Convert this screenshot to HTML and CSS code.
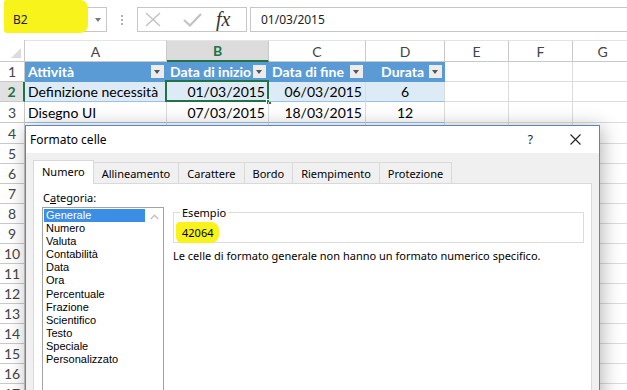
FILE: index.html
```html
<!DOCTYPE html>
<html lang="it">
<head>
<meta charset="utf-8">
<title>Formato celle</title>
<link rel="stylesheet" href="styles.css">
</head>
<body>
<div class="app">
  <div class="fbar">
    <span class="hl-name"></span>
    <div class="namebox"><span class="nb-text">B2</span><span class="nb-arrow"></span></div>
    <div class="dots"><i></i><i></i><i></i></div>
    <div class="fbtns">
      <svg class="ic-x" width="16" height="15" viewBox="0 0 16 15"><path d="M1 1 L15 14 M15 1 L1 14" stroke="#c3c3c3" stroke-width="1.5" fill="none"/></svg>
      <svg class="ic-check" width="19" height="15" viewBox="0 0 19 15"><path d="M1 8 L7 13.5 L18 2" stroke="#c3c3c3" stroke-width="2.2" fill="none"/></svg>
      <span class="fx">fx</span>
    </div>
    <div class="finput">01/03/2015</div>
  </div>

  <div class="sheet">
    <div class="c corner"><span class="tri"></span></div>
    <div class="c ch">A</div>
    <div class="c ch sel">B</div>
    <div class="c ch">C</div>
    <div class="c ch">D</div>
    <div class="c ch">E</div>
    <div class="c ch">F</div>
    <div class="c ch">G</div>

    <div class="c rh">1</div>
    <div class="c th">Attività<span class="flt"></span></div>
    <div class="c th">Data di inizio<span class="flt"></span></div>
    <div class="c th">Data di fine<span class="flt"></span></div>
    <div class="c th right">Durata<span class="flt"></span></div>
    <div class="c"></div><div class="c"></div><div class="c"></div>

    <div class="c rh rsel">2</div>
    <div class="c band">Definizione necessità</div>
    <div class="c band num active">01/03/2015<span class="selbox"></span><span class="handle"></span></div>
    <div class="c band num">06/03/2015</div>
    <div class="c band ctr">6</div>
    <div class="c"></div><div class="c"></div><div class="c"></div>

    <div class="c rh">3</div>
    <div class="c tlast">Disegno UI</div>
    <div class="c tlast num">07/03/2015</div>
    <div class="c tlast num">18/03/2015</div>
    <div class="c tlast ctr">12</div>
    <div class="c"></div><div class="c"></div><div class="c"></div>

    <div class="c rh">4</div><div class="c"></div><div class="c"></div><div class="c"></div><div class="c"></div><div class="c"></div><div class="c"></div><div class="c"></div>
    <div class="c rh">5</div><div class="c"></div><div class="c"></div><div class="c"></div><div class="c"></div><div class="c"></div><div class="c"></div><div class="c"></div>
    <div class="c rh">6</div><div class="c"></div><div class="c"></div><div class="c"></div><div class="c"></div><div class="c"></div><div class="c"></div><div class="c"></div>
    <div class="c rh">7</div><div class="c"></div><div class="c"></div><div class="c"></div><div class="c"></div><div class="c"></div><div class="c"></div><div class="c"></div>
    <div class="c rh">8</div><div class="c"></div><div class="c"></div><div class="c"></div><div class="c"></div><div class="c"></div><div class="c"></div><div class="c"></div>
    <div class="c rh">9</div><div class="c"></div><div class="c"></div><div class="c"></div><div class="c"></div><div class="c"></div><div class="c"></div><div class="c"></div>
    <div class="c rh">10</div><div class="c"></div><div class="c"></div><div class="c"></div><div class="c"></div><div class="c"></div><div class="c"></div><div class="c"></div>
    <div class="c rh">11</div><div class="c"></div><div class="c"></div><div class="c"></div><div class="c"></div><div class="c"></div><div class="c"></div><div class="c"></div>
    <div class="c rh">12</div><div class="c"></div><div class="c"></div><div class="c"></div><div class="c"></div><div class="c"></div><div class="c"></div><div class="c"></div>
    <div class="c rh">13</div><div class="c"></div><div class="c"></div><div class="c"></div><div class="c"></div><div class="c"></div><div class="c"></div><div class="c"></div>
    <div class="c rh">14</div><div class="c"></div><div class="c"></div><div class="c"></div><div class="c"></div><div class="c"></div><div class="c"></div><div class="c"></div>
    <div class="c rh">15</div><div class="c"></div><div class="c"></div><div class="c"></div><div class="c"></div><div class="c"></div><div class="c"></div><div class="c"></div>
    <div class="c rh">16</div><div class="c"></div><div class="c"></div><div class="c"></div><div class="c"></div><div class="c"></div><div class="c"></div><div class="c"></div>
    <div class="c rh">17</div><div class="c"></div><div class="c"></div><div class="c"></div><div class="c"></div><div class="c"></div><div class="c"></div><div class="c"></div>
  </div>

  <div class="dlg">
    <div class="dlg-title">
      <span class="dlg-name">Formato celle</span>
      <span class="q">?</span>
      <svg class="close" width="11" height="11" viewBox="0 0 11 11"><path d="M0.5 0.5 L10.5 10.5 M10.5 0.5 L0.5 10.5" stroke="#222" stroke-width="1.1" fill="none"/></svg>
    </div>
    <div class="dlg-body">
      <div class="tabs">
        <div class="tab on">Numero</div>
        <div class="tab">Allineamento</div>
        <div class="tab">Carattere</div>
        <div class="tab">Bordo</div>
        <div class="tab">Riempimento</div>
        <div class="tab">Protezione</div>
      </div>
      <div class="panel">
        <div class="leftcol">
          <div class="lbl">C<u>a</u>tegoria:</div>
          <div class="list">
            <div class="items">
              <div class="it on">Generale</div>
              <div class="it">Numero</div>
              <div class="it">Valuta</div>
              <div class="it">Contabilità</div>
              <div class="it">Data</div>
              <div class="it">Ora</div>
              <div class="it">Percentuale</div>
              <div class="it">Frazione</div>
              <div class="it">Scientifico</div>
              <div class="it">Testo</div>
              <div class="it">Speciale</div>
              <div class="it">Personalizzato</div>
            </div>
            <div class="sbar">
              <svg width="9" height="6" viewBox="0 0 9 6"><path d="M0.8 5 L4.5 1.2 L8.2 5" stroke="#c2c2c2" stroke-width="1.3" fill="none"/></svg>
            </div>
          </div>
        </div>
        <div class="rightcol">
          <fieldset class="sample">
            <legend>Esempio</legend>
            <span class="sample-val">42064</span>
          </fieldset>
          <p class="desc">Le celle di formato generale non hanno un formato numerico specifico.</p>
        </div>
      </div>
    </div>
  </div>
</div>
</body>
</html>
```

FILE: styles.css
```css
* { box-sizing: border-box; margin: 0; padding: 0; }
html, body { width: 627px; height: 390px; overflow: hidden; background: #fff; }
body { font-family: "Noto Sans", "DejaVu Sans", sans-serif; }
.app { position: relative; width: 627px; height: 390px; overflow: hidden; }

/* formula bar */
.fbar { height: 40px; display: flex; align-items: flex-start; padding-top: 7px; position: relative; }
.hl-name { position: absolute; left: 4px; top: 0; width: 84px; height: 33px; background: #f8f31b; border-radius: 2px 8px 8px 3px; z-index: 1; }
.namebox { margin-left: 5px; width: 102px; height: 25px; border: 1px solid #c6c6c6; display: flex; align-items: center; padding-left: 7px; font-size: 12px; color: #222; }
.nb-text { position: relative; z-index: 2; }
.nb-arrow { margin-left: auto; margin-right: 5px; width: 0; height: 0; border-left: 3.5px solid transparent; border-right: 3.5px solid transparent; border-top: 4px solid #7a7a7a; }
.dots { margin-left: 14px; width: 2px; height: 25px; display: flex; flex-direction: column; justify-content: center; gap: 2px; }
.dots i { display: block; width: 2px; height: 2px; background: #b0b0b0; }
.fbtns { margin-left: 14px; width: 110px; height: 25px; border: 1px solid #c6c6c6; display: flex; align-items: center; padding-left: 7px; }
.ic-check { margin-left: 22px; }
.fx { margin-left: 14px; font-family: "Liberation Serif", "DejaVu Serif", serif; font-style: italic; font-size: 20px; color: #333; line-height: 1; margin-top: -2px; }
.finput { margin-left: 3px; flex: 1; height: 25px; border: 1px solid #c6c6c6; border-right: none; padding-left: 10px; font-size: 12px; line-height: 23px; color: #222; }

/* sheet */
.sheet { display: grid; grid-template-columns: 25px 142px 102px 97px 79px 64px 64px 60px; grid-template-rows: 22px 20px 20px 21px 21px repeat(13, 20px); font-family: Lato, "Noto Sans", sans-serif; font-size: 14px; color: #000; }
.c { border-right: 1px solid #dcdcdc; border-bottom: 1px solid #dcdcdc; display: flex; align-items: center; padding: 0 3px; white-space: nowrap; position: relative; }
.corner { border-color: #c9c9c9; }
.tri { position: absolute; right: 3px; bottom: 3px; width: 0; height: 0; border-left: 10px solid transparent; border-bottom: 10px solid #dcdcdc; }
.ch { justify-content: center; color: #444; border-color: #c9c9c9; border-top: 1px solid #e4e4e4; }
.ch.sel { background: #dcdcdc; color: #217346; font-weight: bold; border-bottom: 2px solid #217346; }
.rh { justify-content: center; color: #444; border-color: #c9c9c9; padding: 0; }
.rh.rsel { background: #e1e1e1; color: #217346; font-weight: bold; border-right: 2px solid #217346; }
.th { background: #5b9bd5; color: #fff; font-weight: bold; border-right-color: #5b9bd5; border-bottom-color: #5b9bd5; }
.th.right { justify-content: flex-end; padding-right: 20px; }
.flt { position: absolute; right: 2px; top: 3px; width: 13px; height: 13px; background: #ececec; }
.flt::after { content: ""; position: absolute; left: 3px; top: 5px; border-left: 3.5px solid transparent; border-right: 3.5px solid transparent; border-top: 4px solid #555; }
.band { background: #ddebf7; border-bottom-color: #9bc2e6; }
.tlast { border-bottom-color: #9bc2e6; }
.num { justify-content: flex-end; }
.ctr { justify-content: center; }
.selbox { position: absolute; left: -2px; top: -2px; right: -1px; bottom: -1px; border: 2px solid #217346; }
.handle { position: absolute; right: -4px; bottom: -4px; width: 6px; height: 6px; background: #217346; border: 1px solid #fff; }

/* dialog */
.dlg { position: absolute; left: 25px; top: 125px; width: 575px; height: 300px; border: 1px solid #5a87bb; background: #f0f0f0; box-shadow: 2px 2px 18px rgba(0,0,0,0.3); font-size: 11px; color: #000; display: flex; flex-direction: column; z-index: 5; }
.dlg-title { height: 27px; background: #fff; display: flex; align-items: center; padding-left: 4px; font-size: 12px; }
.q { margin-left: auto; font-size: 12px; color: #222; }
.close { margin-left: 37px; margin-right: 18px; }
.dlg-body { flex: 1; padding: 6px 7px 0; display: flex; flex-direction: column; }
.tabs { display: flex; align-items: flex-end; height: 24px; }
.tab { height: 21px; padding: 0 8px; border: 1px solid #d9d9d9; border-bottom: none; margin-left: -1px; background: #f0f0f0; display: flex; align-items: center; white-space: nowrap; }
.tab:first-child { margin-left: 0; }
.tab.on { height: 24px; background: #fff; margin-bottom: -1px; position: relative; z-index: 1; padding-bottom: 2px; }
.panel { flex: 1; width: 559px; background: #fff; border: 1px solid #d9d9d9; display: flex; padding: 6px 0 0 8px; }
.leftcol { width: 122px; display: flex; flex-direction: column; }
.lbl { padding-left: 1px; line-height: 15px; height: 15px; }
.lbl u { text-decoration: underline; }
.list { margin-top: 2px; flex: 1; border: 1px solid #a3a3a3; display: flex; padding: 1px 0 0 1px; }
.items { flex: 1; font-family: "Liberation Sans", Arial, sans-serif; font-size: 11px; }
.it { line-height: 13.1px; height: 13.1px; padding-left: 2px; white-space: nowrap; }
.it.on { background: #3a8ee6; color: #fff; }
.sbar { width: 18px; display: flex; justify-content: center; padding-top: 5px; }
.rightcol { margin-left: 9px; width: 411px; padding-top: 16px; }
.sample { border: 1px solid #dcdcdc; height: 37px; padding: 0 0 0 2px; margin: 0; }
.sample legend { margin-left: 4px; padding: 0 2px; line-height: 13px; }
.sample-val { display: inline-block; margin-top: 3px; padding: 3px 6px 3px 6px; background: #f8f31b; border-radius: 4px 8px 8px 6px; }
.desc { margin-top: 6px; line-height: 14px; }
```
